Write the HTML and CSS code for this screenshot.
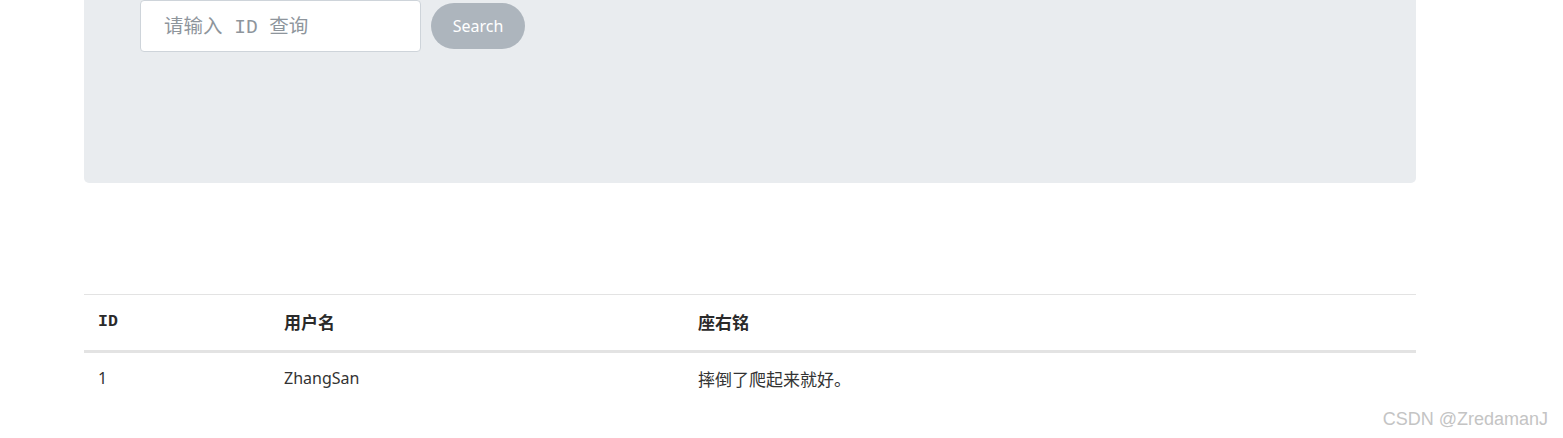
FILE: index.html
```html
<!DOCTYPE html>
<html lang="zh-CN">
<head>
<meta charset="utf-8">
<title>Users</title>
<link rel="stylesheet" href="styles.css">
</head>
<body>
<div class="container">
  <div class="jumbotron">
    <form class="search">
      <input class="search-input" type="text" placeholder="请输入 ID 查询">
      <button class="search-btn" type="button">Search</button>
    </form>
  </div>
  <table class="users">
    <thead>
      <tr>
        <th class="col-id">ID</th>
        <th class="col-name">用户名</th>
        <th class="col-motto">座右铭</th>
      </tr>
    </thead>
    <tbody>
      <tr>
        <td class="col-id">1</td>
        <td class="col-name">ZhangSan</td>
        <td class="col-motto cjk">摔倒了爬起来就好。</td>
      </tr>
    </tbody>
  </table>
</div>
<div class="watermark">CSDN @ZredamanJ</div>
</body>
</html>
```
FILE: styles.css
```css
html, body {
  margin: 0;
  padding: 0;
  background: #ffffff;
}
body {
  font-family: "Noto Sans", "Noto Sans CJK SC", sans-serif;
  color: #212529;
  height: 438px;
  overflow: hidden;
}
.container {
  width: 1332px;
  margin: 0 0 0 84px;
}
.jumbotron {
  background: #e9ecef;
  height: 183px;
  border-radius: 0 0 5px 5px;
  box-sizing: border-box;
  padding: 0 0 0 56px;
}
.search {
  display: flex;
  align-items: flex-start;
  gap: 10px;
}
.search-input {
  width: 281px;
  height: 52px;
  box-sizing: border-box;
  border: 1px solid #ced4da;
  border-radius: 4px;
  background: #fff;
  padding: 3px 0 0 23px;
  margin: 0;
  font-family: "Liberation Mono", "Noto Sans CJK SC", monospace;
  font-size: 19.5px;
  outline: none;
}
.search-input::placeholder {
  color: #8e959c;
}
.search-btn {
  margin-top: 3px;
  width: 94px;
  height: 46px;
  border: none;
  border-radius: 23px;
  background: #adb5bd;
  color: #ffffff;
  font-family: "Noto Sans", sans-serif;
  font-size: 16px;
  padding: 0;
}
.users {
  margin-top: 111px;
  width: 1332px;
  border-collapse: collapse;
  font-family: "Noto Sans", "Noto Sans CJK SC", sans-serif;
  font-size: 16px;
}
.users th, .users td {
  text-align: left;
  padding: 0 14px;
  vertical-align: middle;
}
.users thead th {
  height: 52px;
  padding-bottom: 3px;
  border-top: 1px solid #e3e3e3;
  border-bottom: 3px solid #e3e3e3;
  font-size: 17px;
  font-weight: 600;
  color: #2a2a2a;
}
.users thead th.col-id {
  font-family: "Liberation Mono", monospace;
  font-size: 16.5px;
  font-weight: 700;
}
.users tbody td {
  height: 50px;
  padding-bottom: 4px;
  color: #333;
}
.users tbody td.cjk {
  font-size: 17px;
}
.col-id { width: 158px; }
.col-name { width: 386px; }
.watermark {
  position: absolute;
  right: 15px;
  top: 409px;
  font-family: "Liberation Sans", Arial, sans-serif;
  font-size: 18px;
  color: #c4c4c4;
}
```
